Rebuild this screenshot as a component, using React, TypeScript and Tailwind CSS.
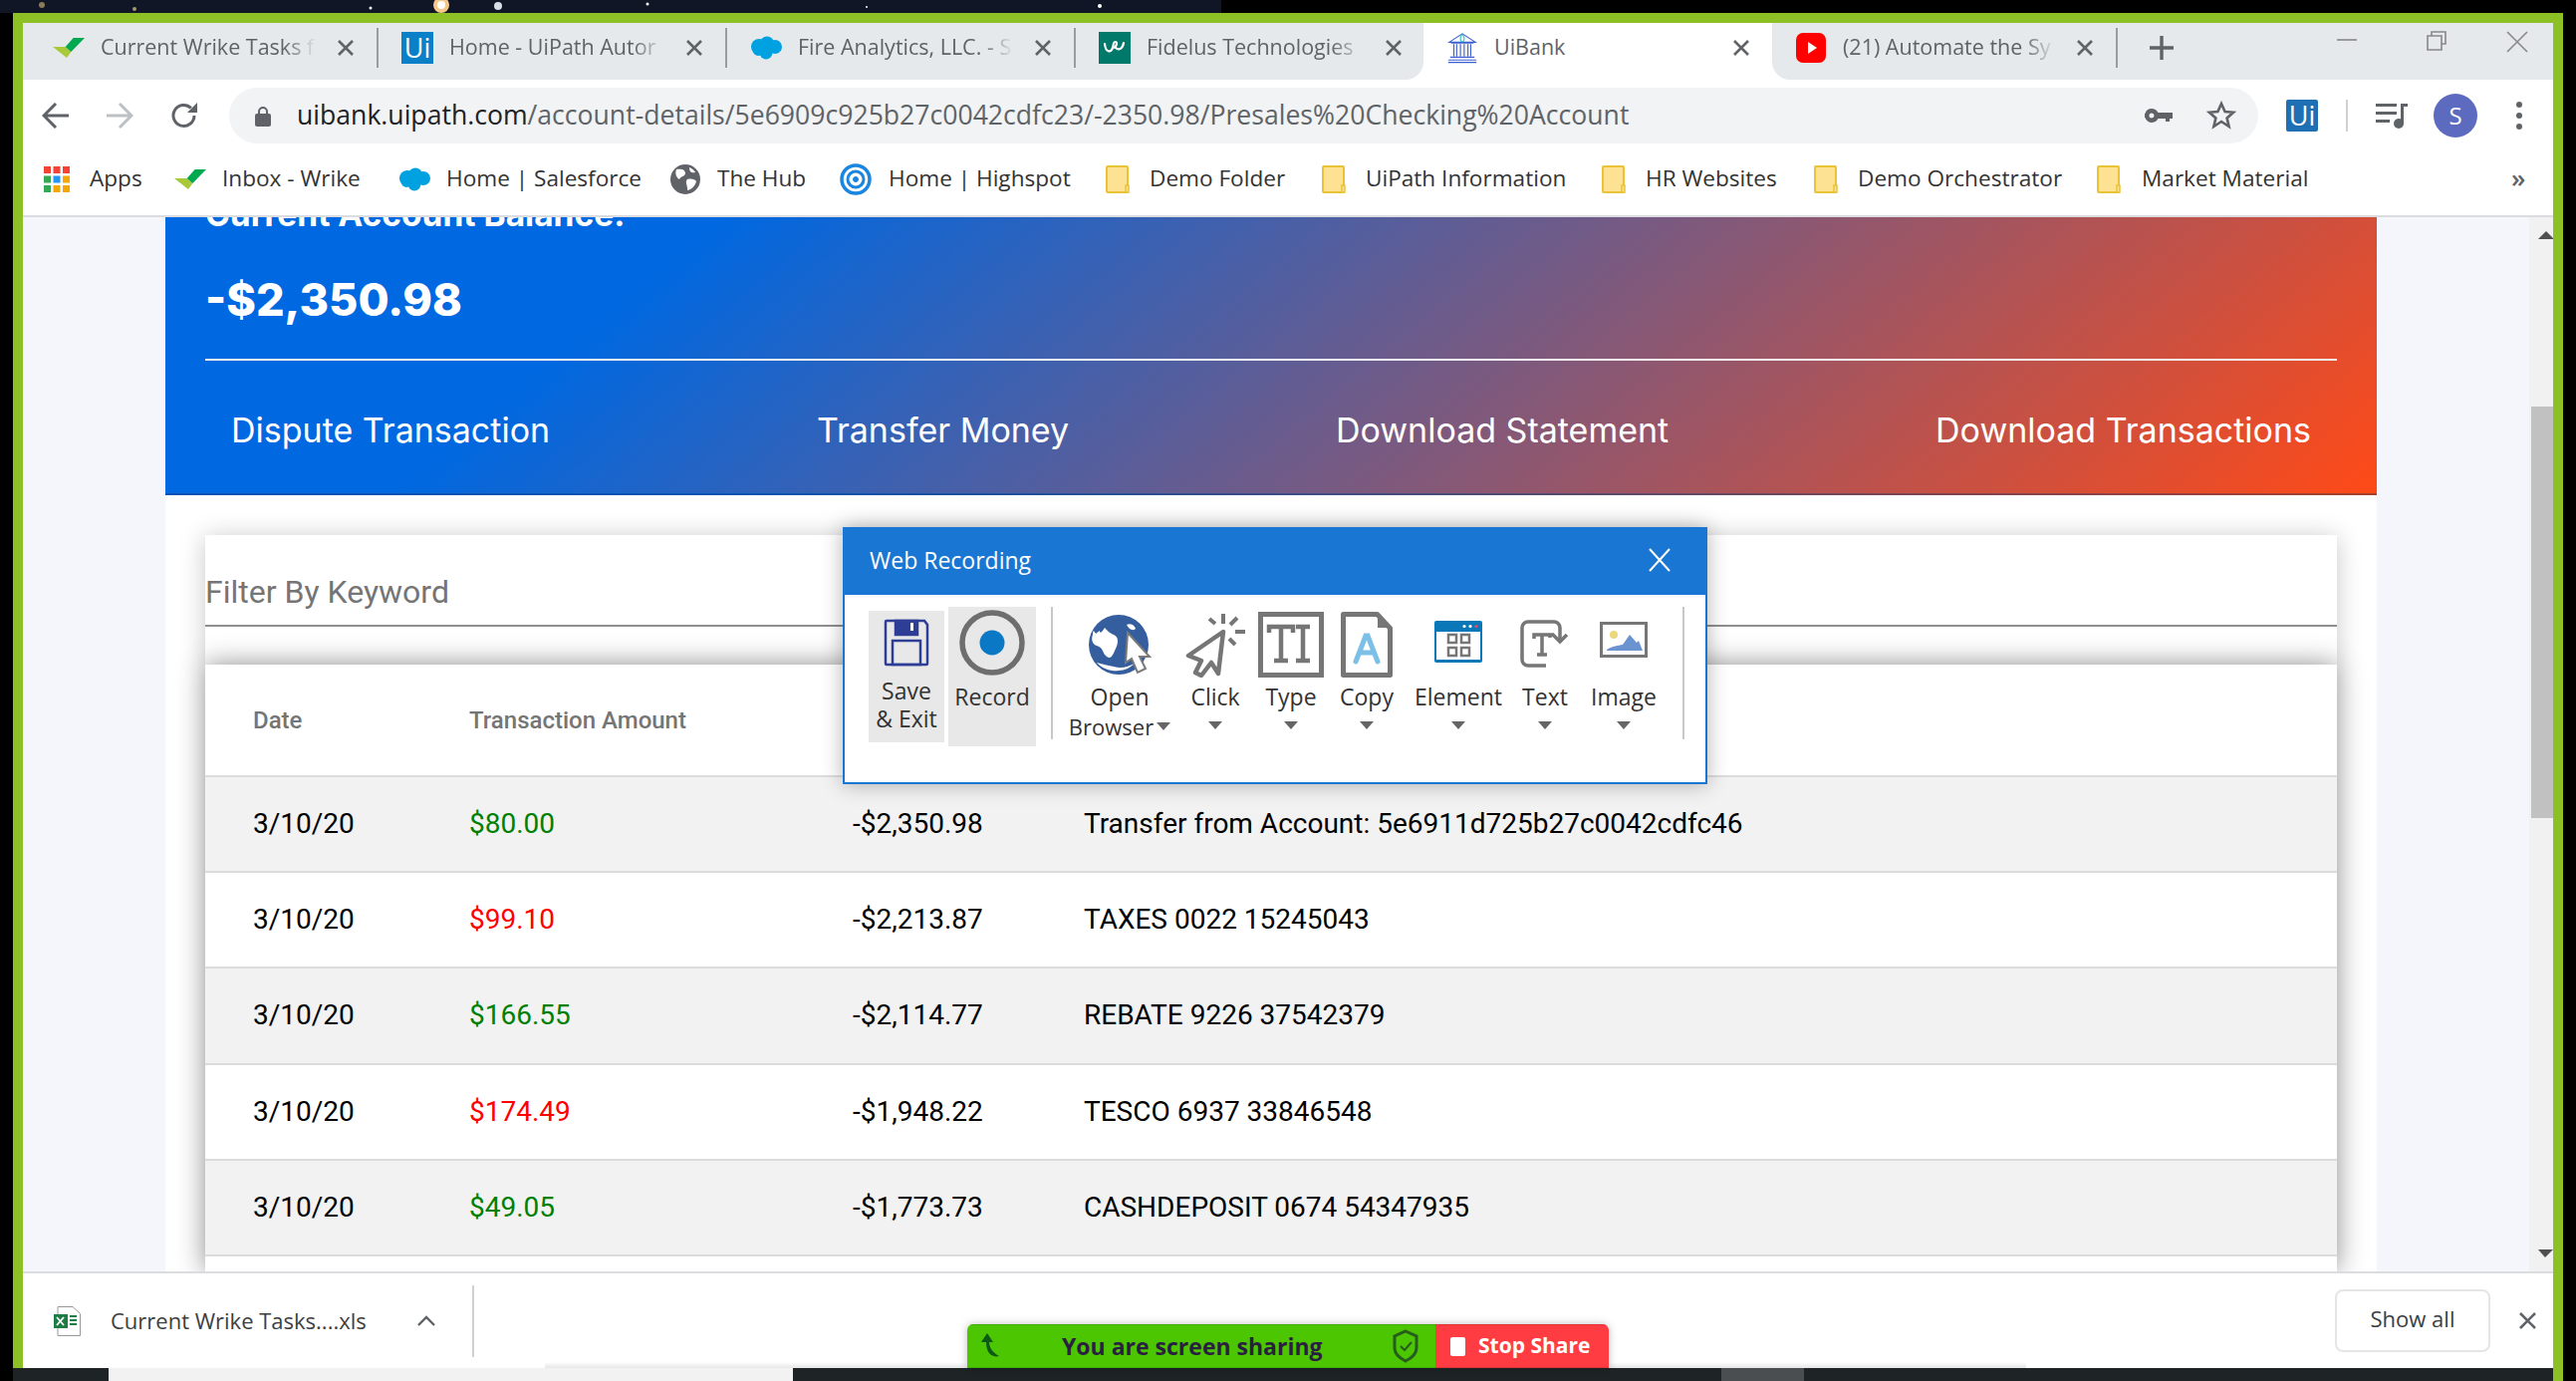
import React from "react";

const OPEN = "font-['Open_Sans',sans-serif]";

const WrikeIcon = ({ w = 32 }: { w?: number }) => (
  <svg width={w} height={(w * 60) / 96} viewBox="0 0 96 60">
    <polygon points="0,27 38,27 55,42 42,60" fill="#a8c93a" />
    <polygon points="38,27 62,0 96,0 55,42" fill="#00a94f" />
  </svg>
);
const UiBox = () => (
  <div className={`w-[32px] h-[32px] bg-[#0a80c8] text-white text-[27px] leading-[32px] text-center ${OPEN}`}>Ui</div>
);
const Cloud = () => (
  <svg width="32" height="24" viewBox="0 0 32 24" fill="#00a1e0">
    <circle cx="9" cy="11" r="8" />
    <circle cx="17" cy="7.5" r="7" />
    <circle cx="25" cy="11" r="7" />
    <circle cx="16" cy="17" r="6.5" />
    <circle cx="8" cy="15" r="5" />
  </svg>
);
const Fidelus = () => (
  <div className="w-[32px] h-[32px] bg-[#00796b] flex items-center justify-center">
    <svg width="24" height="18" viewBox="0 0 24 18" fill="none" stroke="#fff" strokeWidth="2.2" strokeLinecap="round">
      <path d="M2 5c1 9 6 9 8 4 1-3 0-6 3-6 2 0 1 6-3 6M13 9c3 3 7 1 8-5" />
    </svg>
  </div>
);
const Bank = () => (
  <svg width="34" height="32" viewBox="0 0 34 32" fill="none" stroke="#3b5fd0" strokeWidth="1.2">
    <path d="M3 10 17 1l14 9z" fill="#fff" />
    <ellipse cx="17" cy="6" rx="2" ry="3.5" stroke="#3cc" />
    <path d="M5 11h24M8 12v13M11 12v13M15 12v13M19 12v13M23 12v13M26 12v13M4 26h26M2 29h30M2 31.5h30" />
  </svg>
);
const YouTube = () => (
  <svg width="30" height="32" viewBox="0 0 30 32">
    <rect x="0" y="1" width="30" height="30" rx="7" fill="#ff0000" />
    <polygon points="12,10 21,16 12,22" fill="#fff" />
  </svg>
);
const Folder = () => (
  <svg width="24" height="28" viewBox="0 0 24 28">
    <rect x="1" y="1" width="21" height="26" rx="1" fill="#fde293" stroke="#e9c237" strokeWidth="2" />
    <path d="M20 27v-7h3v7z" fill="#fde293" stroke="#e9c237" strokeWidth="1.5" />
  </svg>
);

const Tab = ({ icon, text, cls = "", active = false, sep = true }: { icon: React.ReactNode; text: string; cls?: string; active?: boolean; sep?: boolean }) => (
  <div className={`relative flex items-center shrink-0 pb-[8px] ${active ? "bg-white w-[350px]" : "bg-[#e6e9ec]"} ${cls}`}>
    <div className="w-[32px] ml-[23px] shrink-0 flex justify-center">{icon}</div>
    <div className={`ml-[16px] w-[221px] whitespace-nowrap overflow-hidden text-[21.5px] text-[#5f6368] ${OPEN} ${active ? "" : "[mask-image:linear-gradient(to_right,black_84%,transparent_99%)]"}`}>{text}</div>
    <svg className="ml-[18px] shrink-0" width="18" height="18" viewBox="0 0 18 18" stroke="#5f6368" strokeWidth="2.6"><path d="M2 2l14 14M16 2 2 16" /></svg>
    {sep && <div className="ml-[22px] w-[2px] h-[40px] bg-[#9a9da0]" />}
  </div>
);

const bookmarks: { icon: React.ReactNode; text: string; w: string; gap: string }[] = [
  {
    icon: (
      <svg width="26" height="26" viewBox="0 0 26 26">
        {["#f44336", "#f44336", "#f44336", "#34a853", "#2196f3", "#f4a700", "#34a853", "#f4a700", "#f4a700"].map((c, i) => (
          <rect key={i} x={(i % 3) * 9.5} y={Math.floor(i / 3) * 9.5} width="7" height="7" fill={c} />
        ))}
      </svg>
    ),
    text: "Apps",
    w: "w-[131px]",
    gap: "gap-[20px]",
  },
  { icon: <WrikeIcon />, text: "Inbox - Wrike", w: "w-[225px]", gap: "gap-[16px]" },
  { icon: <Cloud />, text: "Home | Salesforce", w: "w-[273px]", gap: "gap-[16px]" },
  {
    icon: (
      <svg width="30" height="30" viewBox="0 0 30 30">
        <circle cx="15" cy="15" r="15" fill="#5f6368" />
        <path d="M6 5c5-1 9 0 9 4 0 3-5 3-6 6-2-1-5-5-3-10zM17 15c4-1 8 0 9 2-1 5-6 9-9 9 1-3-3-9 0-11zM19 3c3 1 5 3 6 5-3 1-6 0-6-5z" fill="#fff" />
      </svg>
    ),
    text: "The Hub",
    w: "w-[170px]",
    gap: "gap-[17px]",
  },
  {
    icon: (
      <svg width="32" height="32" viewBox="0 0 32 32" fill="none" stroke="#1a86e0">
        <circle cx="16" cy="16" r="14" strokeWidth="3.5" />
        <circle cx="16" cy="16" r="8" strokeWidth="3" />
        <circle cx="16" cy="16" r="2.5" fill="#1a86e0" strokeWidth="1" />
      </svg>
    ),
    text: "Home | Highspot",
    w: "w-[267px]",
    gap: "gap-[17px]",
  },
  { icon: <Folder />, text: "Demo Folder", w: "w-[217px]", gap: "gap-[20px]" },
  { icon: <Folder />, text: "UiPath Information", w: "w-[281px]", gap: "gap-[20px]" },
  { icon: <Folder />, text: "HR Websites", w: "w-[213px]", gap: "gap-[20px]" },
  { icon: <Folder />, text: "Demo Orchestrator", w: "w-[284px]", gap: "gap-[20px]" },
  { icon: <Folder />, text: "Market Material", w: "w-[400px]", gap: "gap-[21px]" },
];

const rows = [
  ["3/10/20", "$80.00", "text-[#008000]", "-$2,350.98", "Transfer from Account: 5e6911d725b27c0042cdfc46"],
  ["3/10/20", "$99.10", "text-[#ff0000]", "-$2,213.87", "TAXES 0022 15245043"],
  ["3/10/20", "$166.55", "text-[#008000]", "-$2,114.77", "REBATE 9226 37542379"],
  ["3/10/20", "$174.49", "text-[#ff0000]", "-$1,948.22", "TESCO 6937 33846548"],
  ["3/10/20", "$49.05", "text-[#008000]", "-$1,773.73", "CASHDEPOSIT 0674 54347935"],
];

const GREY = "#767676";
const Caret = () => (
  <svg width="14" height="8" viewBox="0 0 14 8"><polygon points="0,0 14,0 7,8" fill="#666" /></svg>
);

const Tool = ({ cls, icon, label, browser }: { cls: string; icon: React.ReactNode; label: string; browser?: boolean }) => (
  <div className={`flex flex-col items-center shrink-0 ${cls}`}>
    <div className="h-[70px] flex items-center justify-center">{icon}</div>
    <div className={`mt-[3px] h-[28px] leading-[28px] text-[23px] text-[#333] whitespace-nowrap ${OPEN}`}>{label}</div>
    {browser ? (
      <div className={`mt-[2px] h-[28px] leading-[28px] text-[22px] text-[#333] flex items-center gap-[3px] whitespace-nowrap ${OPEN}`}>
        Browser
        <Caret />
      </div>
    ) : (
      <div className="mt-[1px] h-[28px] flex items-center"><Caret /></div>
    )}
  </div>
);

export default function App() {
  return (
    <div className="relative w-[2586px] h-[1386px] overflow-hidden flex flex-col bg-black">
      {/* desktop wallpaper */}
      <div className="h-[13px] w-full shrink-0 flex">
        <svg width="1226" height="13" viewBox="0 0 1226 13" className="block">
          <rect width="1226" height="13" fill="#101626" />
          <circle cx="443" cy="5" r="8" fill="#f4c98a" />
          <circle cx="443" cy="5" r="4" fill="#fff" />
          <circle cx="500" cy="6" r="4" fill="#d9dde5" />
          <circle cx="42" cy="5" r="3" fill="#8a7a55" />
          <circle cx="650" cy="4" r="1.5" fill="#fff" />
          <circle cx="1104" cy="6" r="2" fill="#fff" />
          <circle cx="372" cy="8" r="1.5" fill="#fff" />
          <circle cx="135" cy="9" r="2" fill="#a89a70" />
          <circle cx="870" cy="7" r="1" fill="#fff" />
        </svg>
      </div>
      <div className="flex-1 flex min-h-0">
        <div className="w-[13px] shrink-0 bg-black" />
        <div className="w-[2560px] shrink-0 flex flex-col">
          <div className="h-[10px] shrink-0 bg-[#8cc024]" />
          <div className="flex-1 flex min-h-0">
            <div className="w-[2550px] flex flex-col min-h-0">
              <div className="flex-1 flex min-h-0 border-l-[10px] border-[#8cc024]">
                <div className="w-[2540px] flex flex-col bg-white min-h-0">
                  {/* tab strip */}
                  <div className="h-[57px] shrink-0 flex bg-white">
                    <div className="w-[7px] bg-[#e6e9ec]" />
                    <Tab icon={<WrikeIcon />} text="Current Wrike Tasks f" cls="w-[350px]" />
                    <Tab icon={<UiBox />} text="Home - UiPath Autor" cls="w-[350px]" />
                    <Tab icon={<Cloud />} text="Fire Analytics, LLC. - S" cls="w-[350px]" />
                    <Tab icon={<Fidelus />} text="Fidelus Technologies" cls="w-[349px] rounded-br-[18px]" sep={false} />
                    <Tab icon={<Bank />} text="UiBank" active sep={false} />
                    <Tab icon={<YouTube />} text="(21) Automate the Sy" cls="w-[347px] rounded-bl-[18px]" />
                    <div className="flex-1 flex bg-[#e6e9ec]">
                      <div className="w-[88px] flex items-center justify-center pb-[8px]">
                        <svg width="24" height="24" viewBox="0 0 24 24" stroke="#5f6368" strokeWidth="3.4"><path d="M12 0v24M0 12h24" /></svg>
                      </div>
                      <div className="flex-1" />
                      <div className="w-[90px] flex justify-center pt-[16px]"><div className="w-[20px] h-[2px] bg-[#9a9a9a]" /></div>
                      <div className="w-[90px] flex justify-center pt-[8px]">
                        <svg width="20" height="20" viewBox="0 0 20 20" fill="none" stroke="#888" strokeWidth="1.6"><path d="M5 5V1h14v12h-4M1 5h14v14H1z" /></svg>
                      </div>
                      <div className="w-[72px] flex justify-center pt-[8px]">
                        <svg width="22" height="22" viewBox="0 0 22 22" stroke="#888" strokeWidth="1.6"><path d="M1 1l20 20M21 1 1 21" /></svg>
                      </div>
                    </div>
                  </div>
                  {/* toolbar */}
                  <div className="h-[80px] shrink-0 flex items-center pb-[8px]">
                    <div className="w-[65px] flex justify-center">
                      <svg width="28" height="26" viewBox="0 0 28 26" fill="none" stroke="#5f6368" strokeWidth="3"><path d="M27 13H3M14 1 2 13l12 12" /></svg>
                    </div>
                    <div className="w-[64px] flex justify-center">
                      <svg width="28" height="26" viewBox="0 0 28 26" fill="none" stroke="#bdc1c6" strokeWidth="3"><path d="M1 13h24M14 1l12 12-12 12" /></svg>
                    </div>
                    <div className="w-[66px] flex justify-center">
                      <svg width="28" height="28" viewBox="0 0 28 28" fill="none"><path d="M24 14a10.5 10.5 0 1 1-3.2-7.6" stroke="#5f6368" strokeWidth="3" /><polygon points="27,1 27,11 17,11" fill="#5f6368" /></svg>
                    </div>
                    <div className="ml-[12px] w-[2037px] h-[56px] rounded-full bg-[#f1f3f4] flex items-center">
                      <div className="ml-[26px] w-[16px] shrink-0">
                        <svg width="16" height="21" viewBox="0 0 16 21" className="block"><path d="M4 9V6a4 4 0 0 1 8 0v3" fill="none" stroke="#5f6368" strokeWidth="2" /><rect y="8" width="16" height="13" rx="2" fill="#5f6368" /></svg>
                      </div>
                      <div className={`ml-[26px] text-[26.6px] whitespace-nowrap text-[#5f6368] ${OPEN}`}>
                        <span className="text-[#202124]">uibank.uipath.com</span>/account-details/5e6909c925b27c0042cdfc23/-2350.98/Presales%20Checking%20Account
                      </div>
                      <div className="flex-1" />
                      <svg width="28" height="14" viewBox="0 0 28 14" fill="#5f6368" className="shrink-0">
                        <path d="M7 0a7 7 0 1 1-6.6 9H0V5h.4A7 7 0 0 1 7 0zm0 4.5a2.500 2.500 0 1 0 0 5 2.500 2.500 0 0 0 0-5zM13 4h15v6h-3v3h-4v-3h-8z" />
                      </svg>
                      <div className="ml-[34px] mr-[22px] shrink-0">
                        <svg width="30" height="30" viewBox="0 0 30 30" fill="none" stroke="#5f6368" strokeWidth="2.6" className="block"><path d="M15 3l3.600 8 8.400.800-6.400 5.600 2 8.600L15 21l-7.600 5 2-8.600L3 11.800l8.400-.8z" /></svg>
                      </div>
                    </div>
                    <div className={`ml-[28px] w-[32px] h-[32px] bg-[#1f6fb5] text-white text-[27px] leading-[32px] text-center rounded-[2px] ${OPEN}`}>Ui</div>
                    <div className="ml-[28px] w-[2px] h-[32px] bg-[#d0d0d0]" />
                    <div className="ml-[28px]">
                      <svg width="32" height="26" viewBox="0 0 32 26" fill="#5f6368" className="block">
                        <rect y="1" width="21" height="3" /><rect y="9" width="21" height="3" /><rect y="17" width="14" height="3" />
                        <circle cx="23" cy="21" r="5" /><path d="M25 21V1h7v3h-4v17z" />
                      </svg>
                    </div>
                    <div className={`ml-[26px] w-[44px] h-[44px] rounded-full bg-[#5c6bc0] text-white text-[24px] leading-[44px] text-center ${OPEN}`}>S</div>
                    <div className="ml-[39px] w-[6px] flex flex-col gap-[5px]">
                      <div className="w-[6px] h-[6px] rounded-full bg-[#5f6368]" />
                      <div className="w-[6px] h-[6px] rounded-full bg-[#5f6368]" />
                      <div className="w-[6px] h-[6px] rounded-full bg-[#5f6368]" />
                    </div>
                  </div>
                  {/* bookmarks */}
                  <div className="h-[56px] shrink-0 flex items-center pl-[21px] pb-[16px] pt-[0px]">
                    {bookmarks.map((b) => (
                      <div key={b.text} className={`flex items-center shrink-0 ${b.w} ${b.gap}`}>
                        {b.icon}
                        <span className={`-mt-[3px] text-[22.6px] text-[#333] whitespace-nowrap ${OPEN}`}>{b.text}</span>
                      </div>
                    ))}
                    <span className={`ml-[16px] -mt-[3px] text-[26px] font-semibold text-[#5f6368] ${OPEN}`}>»</span>
                  </div>
                  <div className="h-[2px] shrink-0 bg-[#dadce0]" />
                  {/* page */}
                  <div className="flex-1 flex min-h-0 overflow-hidden bg-[#f4f6fb]">
                    <div className="w-[143px] shrink-0" />
                    <div className="w-[2220px] shrink-0 bg-white flex flex-col">
                      <div className="h-[279px] shrink-0 overflow-hidden flex flex-col px-[40px] border-b-2 border-black/20 bg-[linear-gradient(140deg,#0068e0_22%,#ff4a17_100%)] text-white font-[Inter,sans-serif]">
                        <div className="-mt-[24px] h-[42px] leading-[42px] text-[33.500px] font-bold whitespace-nowrap">Current Account Balance:</div>
                        <div className="mt-[33px] h-[64px] leading-[64px] text-[45px] font-extrabold whitespace-nowrap">-$2,350.98</div>
                        <div className="mt-[27px] h-[2px] bg-[#f0f0f0] shrink-0" />
                        <div className="mt-[48px] flex justify-between px-[26px] text-[34px] leading-[44px] whitespace-nowrap">
                          <span>Dispute Transaction</span>
                          <span>Transfer Money</span>
                          <span>Download Statement</span>
                          <span>Download Transactions</span>
                        </div>
                      </div>
                      <div className="mt-[40px] mx-[40px] flex-1 flex flex-col min-h-0 font-[Roboto,sans-serif]">
                        <div className="h-[130px] shrink-0 bg-white shadow-[0_2px_24px_rgba(0,0,0,0.22)]">
                          <div className="h-[92px] flex items-end pb-[13px] border-b-2 border-[#8f8f8f] text-[32px] leading-[40px] text-[#757575]">Filter By Keyword</div>
                        </div>
                        <div className="flex-1 bg-white shadow-[0_0_26px_rgba(0,0,0,0.45)] flex flex-col">
                          <div className="h-[111px] shrink-0 flex items-center pl-[48px] text-[24px] font-medium text-[#757575]">
                            <div className="w-[217px]">Date</div>
                            <div>Transaction Amount</div>
                          </div>
                          {rows.map((r, i) => (
                            <div key={i} className={`h-[96.2px] shrink-0 flex items-center pl-[48px] text-[28px] text-black border-t-2 border-[#dcdcdc] ${i % 2 === 0 ? "bg-[#f2f2f2]" : "bg-white"}`}>
                              <div className="w-[217px]">{r[0]}</div>
                              <div className={`w-[385px] ${r[2]}`}>{r[1]}</div>
                              <div className="w-[232px]">{r[3]}</div>
                              <div>{r[4]}</div>
                            </div>
                          ))}
                          <div className="border-t-2 border-[#dcdcdc]" />
                        </div>
                      </div>
                    </div>
                    <div className="flex-1" />
                    <div className="w-[24px] shrink-0 bg-[#f1f1f1] flex flex-col items-end overflow-hidden">
                      <svg width="15" height="8" viewBox="0 0 15 8" className="mt-[14px] shrink-0"><polygon points="8,0 0,8 16,8" fill="#505050" /></svg>
                      <div className="mt-[168px] w-[22px] h-[413px] bg-[#c1c1c1] shrink-0" />
                      <div className="flex-1" />
                      <svg width="15" height="8" viewBox="0 0 15 8" className="mb-[14px] shrink-0"><polygon points="0,0 15,0 7,8" fill="#505050" /></svg>
                    </div>
                  </div>
                  <div className="h-[2px] shrink-0 bg-[#dadce0]" />
                  {/* download shelf */}
                  <div className="h-[95px] shrink-0 flex items-center bg-white">
                    <div className="ml-[31px] w-[27px] shrink-0">
                      <svg width="27" height="30" viewBox="0 0 27 30" className="block">
                        <path d="M4 .5h15l7.500 7v22H4z" fill="#fff" stroke="#999" />
                        <rect x="0" y="8" width="14" height="14" fill="#1e7d45" />
                        <path d="M3 11l7 8M10 11l-7 8" stroke="#fff" strokeWidth="1.800" />
                        <path d="M16 10h7M16 14h7M16 18h7" stroke="#1e7d45" strokeWidth="2" />
                      </svg>
                    </div>
                    <span className={`ml-[30px] w-[258px] text-[22px] text-[#3c4043] whitespace-nowrap ${OPEN}`}>Current Wrike Tasks....xls</span>
                    <svg className="ml-[50px]" width="18" height="11" viewBox="0 0 18 11" fill="none" stroke="#5f6368" strokeWidth="2.400"><path d="M1 10l8-8 8 8" /></svg>
                    <div className="ml-[37px] w-[2px] h-[72px] bg-[#d0d0d0]" />
                    <div className="flex-1" />
                    <div className={`w-[156px] h-[63px] rounded-[8px] border-2 border-[#e4e5e7] text-[22px] text-[#3c4043] flex items-center justify-center pb-[5px] ${OPEN}`}>Show all</div>
                    <svg className="ml-[29px] mr-[17px]" width="17" height="17" viewBox="0 0 17 17" stroke="#5f6368" strokeWidth="2.600"><path d="M1 1l15 15M16 1 1 16" /></svg>
                  </div>
                </div>
              </div>
              {/* desktop strip below the window */}
              <div className="h-[13px] shrink-0 flex bg-[#1e2326]">
                <div className="w-[96px]" />
                <div className="w-[687px] bg-[#f2f2f2]" />
                <div className="w-[932px]" />
                <div className="w-[83px] bg-[#4b4e50]" />
              </div>
            </div>
            <div className="w-[10px] shrink-0 bg-[#8cc024]" />
          </div>
        </div>
        <div className="w-[13px] shrink-0 bg-black" />
      </div>

      {/* shadow of the sharing bar's window */}
      <div className="absolute left-[547px] top-[1367px] w-[1487px] h-[6px] bg-gradient-to-b from-transparent to-black/10" />

      {/* Web Recording floating window */}
      <div className="absolute left-[846px] top-[529px] w-[868px] h-[258px] bg-white border-2 border-t-0 border-[#1976d2] shadow-[0_0_20px_rgba(0,0,0,0.3)] flex flex-col">
        <div className="h-[68px] shrink-0 -mx-[2px] bg-[#1976d2] flex items-center justify-between pl-[27px] pr-[37px] pb-[2px]">
          <span className={`text-[23px] text-white ${OPEN}`}>Web Recording</span>
          <svg width="22" height="24" viewBox="0 0 22 24" stroke="#fff" strokeWidth="2"><path d="M1 1l20 22M21 1 1 23" /></svg>
        </div>
        <div className="flex items-start flex-1">
          <div className="ml-[24px] mt-[16px] w-[76px] h-[132px] shrink-0 bg-[#e8e8e8] flex flex-col items-center">
            <svg className="mt-[8px]" width="46" height="48" viewBox="0 0 46 48" fill="none" stroke="#2e3d96" strokeWidth="2.500">
              <path d="M2 3a1 1 0 0 1 1-1h38l3 4v39a1 1 0 0 1-1 1H3a1 1 0 0 1-1-1z" />
              <rect x="12" y="2" width="22" height="14" fill="#2e3d96" />
              <rect x="27" y="4" width="3" height="8" fill="#fff" stroke="none" />
              <rect x="9" y="22" width="28" height="24" />
            </svg>
            <div className={`mt-[10px] text-[23px] leading-[28px] text-center text-[#333] whitespace-nowrap ${OPEN}`}>Save<br />& Exit</div>
          </div>
          <div className="ml-[4px] mt-[12px] w-[88px] h-[140px] shrink-0 bg-[#e8e8e8] flex flex-col items-center">
            <svg className="mt-[3px]" width="66" height="66" viewBox="0 0 66 66">
              <circle cx="33" cy="33" r="30" fill="none" stroke="#6e6e6e" strokeWidth="5.500" />
              <circle cx="33" cy="33" r="12.500" fill="#0a78c4" />
            </svg>
            <div className={`mt-[7px] text-[23px] leading-[28px] text-[#333] ${OPEN}`}>Record</div>
          </div>
          <div className="ml-[15px] mt-[12px] w-[2px] h-[133px] shrink-0 bg-[#c8c8c8]" />
          <div className="ml-[19px] mt-[15px] flex">
            <Tool
              cls="w-[96px]"
              browser
              label="Open"
              icon={
                <svg width="66" height="64" viewBox="0 0 66 64">
                  <circle cx="32" cy="32" r="30" fill="#355e9e" />
                  <path d="M7 18c3 5 2 2 6 0 0 3 2 2 5-3 2 2 4 5 9 7 5 2 5 8 2 14-3 6-4 11-9 8-5-4-3-9-10-11-4-1-6-6-4-11 0-2 0-3 1-4zM40 12c5-2 8 1 9 4-3 3-7 0-9-4zM10 50c6 7 16 9 22 8 6 0 12-3 17-8-8 5-15 6-22 4-7-1-12-3-17-4z" fill="#fff" />
                  <polygon points="41,20 63,44 53,44 59,56 51,60 45,46 39,50" fill="#fff" stroke="#7a7a7a" strokeWidth="2" />
                </svg>
              }
            />
            <Tool
              cls="ml-[8px] w-[80px]"
              label="Click"
              icon={
                <svg width="60" height="66" viewBox="0 0 60 66" fill="none" stroke={GREY} strokeWidth="4.500" strokeLinecap="round" strokeLinejoin="round">
                  <path d="M38 20 3 44l13 5-6 12 6 3 10-13 7 11z" />
                  <path d="M38 2v10M52 6l-7 7M60 20H50M50 33l-6-6M24 7l6 5" strokeWidth="4" strokeLinecap="butt" />
                </svg>
              }
            />
            <Tool
              cls="w-[72px]"
              label="Type"
              icon={
                <svg width="66" height="66" viewBox="0 0 66 66" fill="none" stroke={GREY}>
                  <rect x="2.500" y="2.500" width="61" height="61" strokeWidth="5" />
                  <path d="M11 21v-6h24v6M23 15v33M16 49h14M38 15h14M45 15v34M38 49h14" strokeWidth="4.500" />
                </svg>
              }
            />
            <Tool
              cls="ml-[4px] w-[72px]"
              label="Copy"
              icon={
                <svg width="52" height="66" viewBox="0 0 52 66" fill="none">
                  <path d="M2.500 2.500h34l13 14v47h-47z" stroke={GREY} strokeWidth="5" strokeLinejoin="round" />
                  <polygon points="37,2 50,16 37,16" fill={GREY} />
                  <path d="M15 50 25 24h2l10 26M19 41h14" stroke="#7cc0e8" strokeWidth="5" strokeLinecap="round" />
                </svg>
              }
            />
            <Tool
              cls="ml-[12px] w-[88px]"
              label="Element"
              icon={
                <svg width="48" height="42" viewBox="0 0 48 42" className="mb-[6px]">
                  <rect width="48" height="42" rx="2" fill="#0a78b8" />
                  <rect x="2" y="11" width="44" height="28" fill="#fff" />
                  <circle cx="30" cy="5.500" r="1.600" fill="#fff" /><circle cx="36" cy="5.500" r="1.600" fill="#fff" /><circle cx="42" cy="5.500" r="1.600" fill="#f04860" />
                  <g fill="none" stroke={GREY} strokeWidth="2.500">
                    <rect x="14" y="14" width="8" height="8" /><rect x="27" y="14" width="8" height="8" /><rect x="14" y="27" width="8" height="8" /><rect x="27" y="27" width="8" height="8" />
                  </g>
                </svg>
              }
            />
            <Tool
              cls="ml-[7px] w-[72px]"
              label="Text"
              icon={
                <svg width="50" height="48" viewBox="0 0 50 48" fill="none" stroke={GREY} className="mb-[2px]">
                  <path d="M26 46H8a6 6 0 0 1-6-6V8a6 6 0 0 1 6-6h26a6 6 0 0 1 6 6v12" strokeWidth="3.500" />
                  <path d="M33 15l7 7 7-7" strokeWidth="3.500" />
                  <path d="M14 19v-4h20M14 15h16v3M22 15v20M17 35h10" strokeWidth="3.500" />
                </svg>
              }
            />
            <Tool
              cls="ml-[3px] w-[80px]"
              label="Image"
              icon={
                <svg width="48" height="36" viewBox="0 0 48 36" className="mb-[10px]">
                  <rect x="1.500" y="1.500" width="45" height="33" fill="#fff" stroke={GREY} strokeWidth="3" />
                  <circle cx="14" cy="13" r="4" fill="#ecd77a" />
                  <path d="M7 28c6-4 11-4 16-5l7-10 7 8 2-2 4 10H7z" fill="#6a93cf" />
                </svg>
              }
            />
          </div>
          <div className="ml-[19px] mt-[12px] w-[2px] h-[133px] shrink-0 bg-[#c8c8c8]" />
        </div>
      </div>

      {/* screen sharing bar */}
      <div className="absolute left-[971px] top-[1329px] w-[644px] h-[44px] flex rounded-t-[6px] overflow-hidden shadow-[0_0_8px_rgba(0,0,0,0.25)] font-['Open_Sans',sans-serif] font-bold whitespace-nowrap">
        <div className="w-[470px] bg-[#4bc600] border-y border-[#3fae00] flex items-center pl-[14px] text-[#2a1f40] text-[23px]">
          <svg width="20" height="26" viewBox="0 0 20 26" fill="#0d5a16"><path d="M6 0l6 9H8c0 5 3 10 10 14-8 2-13-4-13-14H0z" /></svg>
          <span className="ml-[61px]">You are screen sharing</span>
          <svg className="ml-[70px]" width="26" height="34" viewBox="0 0 26 34" fill="none" stroke="#265d1c" strokeWidth="3"><path d="M13 2l11 5v12c0 6-5 10-11 13C7 29 2 25 2 19V7z" /><path d="M8 17l4 4 7-8" strokeWidth="2" /></svg>
        </div>
        <div className="flex-1 bg-[#ff3c41] border-y border-[#e03438] flex items-center pl-[15px] text-white text-[21px]">
          <div className="w-[15px] h-[19px] rounded-[2px] bg-white" />
          <span className="ml-[13px]">Stop Share</span>
        </div>
      </div>
    </div>
  );
}
